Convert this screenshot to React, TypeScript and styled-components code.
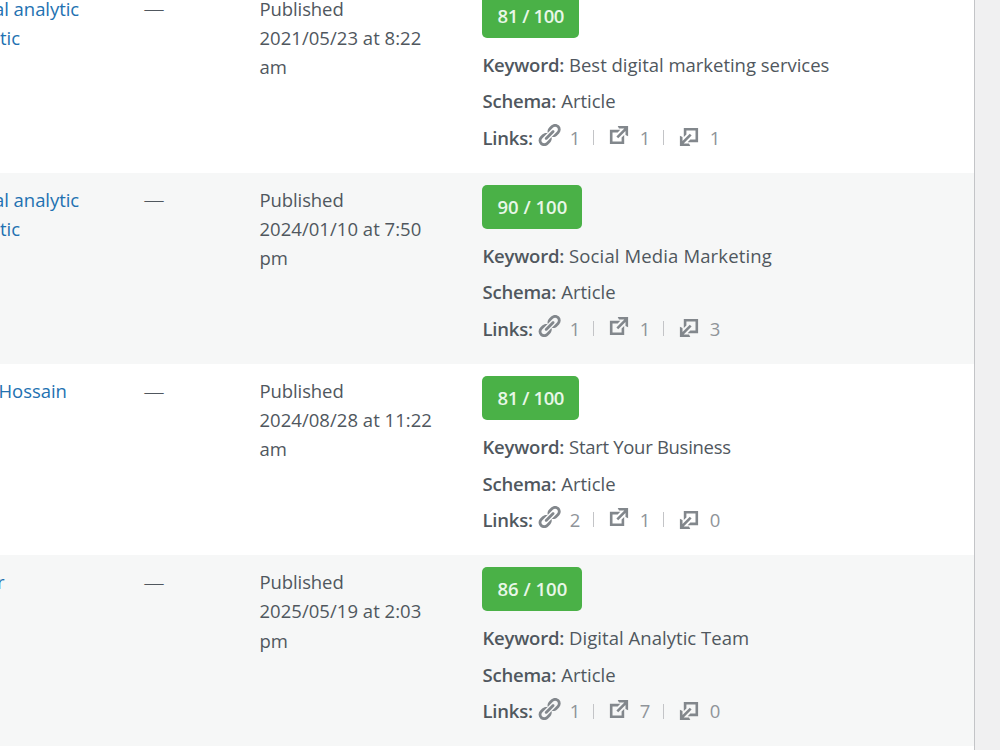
import React from 'react';
import styled, { createGlobalStyle } from 'styled-components';

const GlobalStyle = createGlobalStyle`
  * { box-sizing: border-box; }
  body {
    margin: 0;
    background: #f0f0f1;
    overflow: hidden;
    font-family: 'Open Sans', 'Noto Sans', sans-serif;
    font-size: 18.5px;
    line-height: 29.2px;
    color: #50575e;
  }
`;

const Viewport = styled.div`
  width: 1000px;
  height: 750px;
  overflow: hidden;
  background: #f0f0f1;
`;

const Table = styled.div`
  width: 975px;
  height: 790px;
  margin-top: -18.46px;
  background: #fff;
  border-right: 1px solid #c3c4c7;
`;

const Row = styled.div<{ $striped: boolean }>`
  display: grid;
  grid-template-columns: 143.5px 116px 222.5px 1fr;
  height: 191.2px;
  padding-top: 12px;
  background: ${(p) => (p.$striped ? '#f6f7f7' : '#fff')};
`;

const AuthorCell = styled.div`
  display: flex;
  flex-direction: column;
  overflow: hidden;
  color: #2271b1;
`;

const AuthorLine = styled.span<{ $cut: number }>`
  margin-left: ${(p) => -p.$cut}px;
  letter-spacing: -0.05px;
  white-space: nowrap;
`;

const TagsCell = styled.div`
  padding-top: 0.6px;
  font-size: 21px;
  font-weight: 300;
`;

const DateCell = styled.div`
  width: 180px;
  letter-spacing: 0.03px;
`;

const Status = styled.span`
  letter-spacing: -0.1px;
`;

const SeoCell = styled.div`
  display: flex;
  flex-direction: column;
  align-items: flex-start;
`;

const Score = styled.div<{ $width: number; $track: number }>`
  width: ${(p) => p.$width}px;
  height: 44px;
  margin-bottom: 12.1px;
  padding-left: 15.5px;
  border-radius: 5px;
  background: #4ab147;
  color: #e8f7e8;
  font-weight: 600;
  line-height: 44px;
  letter-spacing: ${(p) => p.$track}px;
  white-space: nowrap;
`;

const Detail = styled.div`
  display: flex;
  gap: 5px;
  height: 29.2px;
  margin-bottom: 7.45px;
  padding-left: 0.5px;
  white-space: nowrap;
`;

const Label = styled.span`
  font-weight: 600;
  letter-spacing: -0.22px;
`;

const Value = styled.span<{ $track?: number }>`
  letter-spacing: ${(p) => p.$track ?? 0}px;
`;

const LinkStats = styled.div`
  display: flex;
  margin-left: -2.2px;
  color: #82878c;
`;

const Stat = styled.span`
  display: flex;
  width: 70px;
  color: #82878c;
`;

const IconBox = styled.span<{ $drop?: number }>`
  display: block;
  width: 26px;
  height: 26px;
  margin-top: ${(p) => -0.9 + (p.$drop ?? 0)}px;
`;

const Glyph = styled.svg<{ $flip?: boolean }>`
  display: block;
  width: 26px;
  height: 26px;
  fill: currentColor;
  transform: ${(p) => (p.$flip ? 'rotate(180deg)' : 'none')};
`;

const Count = styled.span`
  margin-left: 8px;
  color: #8f9499;
`;

const Divider = styled.i`
  width: 1px;
  height: 15px;
  margin: 7.2px 0 0 13px;
  background: #c3c4c7;
`;

const LINK_PATH =
  'M17.74 2.76c1.68 1.69 1.68 4.41 0 6.1l-1.53 1.52c-1.12 1.12-2.7 1.47-4.14 1.09l2.62-2.61.76-.77.76-.76c.84-.84.84-2.2 0-3.04-.84-.85-2.2-.85-3.04 0l-.77.76-3.38 3.38c-.37-1.44-.02-3.02 1.1-4.14l1.52-1.53c1.69-1.68 4.42-1.68 6.1 0zM8.59 13.43l5.34-5.34c.42-.42.42-1.1 0-1.52-.44-.43-1.13-.39-1.53 0l-5.33 5.34c-.42.42-.42 1.1 0 1.52.44.43 1.13.39 1.52 0zm-.76 2.29l4.14-4.15c.38 1.44.03 3.02-1.09 4.14l-1.52 1.53c-1.69 1.68-4.41 1.68-6.1 0-1.68-1.68-1.68-4.42 0-6.1l1.53-1.52c1.12-1.12 2.7-1.47 4.14-1.1l-4.14 4.15c-.85.84-.85 2.2 0 3.05.84.84 2.2.84 3.04 0z';
const EXTERNAL_PATH =
  'M9 3h8v8l-2-1V6.92l-5.6 5.59-1.41-1.41L14.08 5H10zm3 12v-3l2-2v7H3V6h8L9 8H5v7h7z';

interface Post {
  author: { text: string; cut: number }[];
  date: string;
  time: string;
  score: number;
  scoreWidth: number;
  scoreTrack: number;
  keyword: string;
  track: number;
  links: [number, number, number];
}

const posts: Post[] = [
  {
    author: [{ text: 'al analytic', cut: 6 }, { text: 'tic', cut: 0 }],
    date: '2021/05/23 at 8:22', time: 'am',
    score: 81, scoreWidth: 97, scoreTrack: -0.4,
    keyword: 'Best digital marketing services', track: -0.02, links: [1, 1, 1],
  },
  {
    author: [{ text: 'al analytic', cut: 6 }, { text: 'tic', cut: 0 }],
    date: '2024/01/10 at 7:50', time: 'pm',
    score: 90, scoreWidth: 100, scoreTrack: 0,
    keyword: 'Social Media Marketing', track: 0.13, links: [1, 1, 3],
  },
  {
    author: [{ text: 'Hossain', cut: 1.5 }],
    date: '2024/08/28 at 11:22', time: 'am',
    score: 81, scoreWidth: 97, scoreTrack: -0.4,
    keyword: 'Start Your Business', track: -0.3, links: [2, 1, 0],
  },
  {
    author: [{ text: 'r', cut: 3 }],
    date: '2025/05/19 at 2:03', time: 'pm',
    score: 86, scoreWidth: 100, scoreTrack: 0,
    keyword: 'Digital Analytic Team', track: 0.04, links: [1, 7, 0],
  },
];

function PostRow({ post, striped }: { post: Post; striped: boolean }) {
  const [internal, external, incoming] = post.links;
  return (
    <Row $striped={striped}>
      <AuthorCell>
        {post.author.map((line) => (
          <AuthorLine key={line.text} $cut={line.cut}>{line.text}</AuthorLine>
        ))}
      </AuthorCell>
      <TagsCell>—</TagsCell>
      <DateCell>
        <Status>Published</Status><br />{post.date}<br />{post.time}
      </DateCell>
      <SeoCell>
        <Score $width={post.scoreWidth} $track={post.scoreTrack}>{`${post.score} / 100`}</Score>
        <Detail><Label>Keyword:</Label><Value $track={post.track}>{post.keyword}</Value></Detail>
        <Detail><Label>Schema:</Label><Value>Article</Value></Detail>
        <Detail>
          <Label>Links:</Label>
          <LinkStats>
            <Stat>
              <IconBox><Glyph viewBox="0 0 20 20"><path d={LINK_PATH} /></Glyph></IconBox>
              <Count>{internal}</Count>
              <Divider />
            </Stat>
            <Stat>
              <IconBox><Glyph viewBox="0 0 20 20"><path d={EXTERNAL_PATH} /></Glyph></IconBox>
              <Count>{external}</Count>
              <Divider />
            </Stat>
            <Stat>
              <IconBox $drop={2.3}><Glyph $flip viewBox="0 0 20 20"><path d={EXTERNAL_PATH} /></Glyph></IconBox>
              <Count>{incoming}</Count>
            </Stat>
          </LinkStats>
        </Detail>
      </SeoCell>
    </Row>
  );
}

export default function App() {
  return (
    <Viewport>
      <GlobalStyle />
      <Table>
        {posts.map((post, i) => (
          <PostRow key={post.date} post={post} striped={i % 2 === 1} />
        ))}
      </Table>
    </Viewport>
  );
}
